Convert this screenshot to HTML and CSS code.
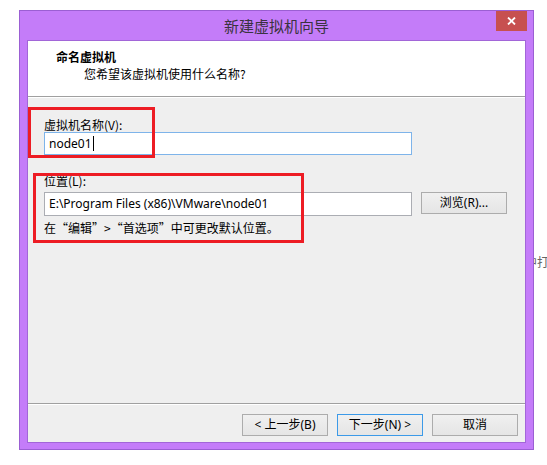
FILE: index.html
```html
<!DOCTYPE html>
<html lang="zh-CN">
<head>
<meta charset="utf-8">
<title>新建虚拟机向导</title>
<link rel="stylesheet" href="styles.css">
</head>
<body>
<div class="stage">
  <span class="behind">中打</span>
  <div class="window">
    <div class="titlebar">
      <span></span>
      <span class="title">新建虚拟机向导</span>
      <button class="close" aria-label="关闭">
        <svg width="9" height="8" viewBox="0 0 9 8"><path d="M1 0.5 L8 7.5 M8 0.5 L1 7.5" stroke="#fff" stroke-width="1.8" fill="none"/></svg>
      </button>
    </div>
    <div class="client">
      <div class="header">
        <div class="h-title">命名虚拟机</div>
        <div class="h-sub">您希望该虚拟机使用什么名称?</div>
      </div>
      <div class="form">
        <label class="lbl">虚拟机名称(V):</label>
        <div class="input focused">node01<span class="caret"></span></div>
        <label class="lbl lbl-loc">位置(L):</label>
        <div class="row">
          <div class="input path">E:\Program Files (x86)\VMware\node01</div>
          <button class="btn browse">浏览(R)...</button>
        </div>
        <div class="hint">在“编辑”&gt;“首选项”中可更改默认位置。</div>
      </div>
      <div class="footer">
        <button class="btn">&lt; 上一步(B)</button>
        <button class="btn default">下一步(N) &gt;</button>
        <button class="btn">取消</button>
      </div>
    </div>
    <div class="mark mark-name"></div>
    <div class="mark mark-loc"></div>
  </div>
</div>
</body>
</html>
```
FILE: styles.css
```css
html, body {
  margin: 0;
  padding: 0;
  background: #ffffff;
}
body {
  font-family: "Noto Sans", "Noto Sans CJK SC", sans-serif;
  font-size: 12px;
  color: #000;
}
.stage {
  position: relative;
  width: 547px;
  height: 465px;
  padding: 10px 0 0 19px;
  box-sizing: border-box;
}
.behind {
  position: absolute;
  left: 525px;
  top: 254px;
  color: #666;
  font-family: "Noto Sans CJK SC", sans-serif;
  font-size: 12px;
  line-height: 16px;
  white-space: nowrap;
  z-index: 0;
}
.window {
  position: relative;
  z-index: 1;
  width: 515px;
  height: 440px;
  box-sizing: border-box;
  background: #c47cf9;
  border: 1px solid #9b5fd3;
  padding: 0 7px 6px 7px;
  display: flex;
  flex-direction: column;
}
.titlebar {
  height: 29px;
  display: grid;
  grid-template-columns: 1fr auto 1fr;
  align-items: center;
}
.title {
  font-family: "Noto Sans CJK SC", sans-serif;
  font-size: 15px;
  color: #3a3340;
  line-height: 20px;
}
.close {
  justify-self: end;
  align-self: start;
  width: 31px;
  height: 20px;
  margin-right: -1px;
  border: 0;
  padding: 0;
  background: #c75050;
  display: flex;
  align-items: center;
  justify-content: center;
}
.client {
  flex: 1;
  background: #efefef;
  border: 1px solid #a266d8;
  display: flex;
  flex-direction: column;
}
.header {
  background: #fff;
  border-bottom: 1px solid #a0a0a0;
  box-shadow: 0 1px 0 #ffffff;
  padding: 8px 0 0 28px;
  box-sizing: content-box;
  height: 47px;
}
.h-title {
  font-family: "Noto Sans CJK SC", sans-serif;
  font-weight: bold;
  line-height: 16px;
}
.h-sub {
  font-family: "Noto Sans CJK SC", sans-serif;
  line-height: 16px;
  margin: 1px 0 0 28px;
}
.form {
  flex: 1;
  display: flex;
  flex-direction: column;
  align-items: flex-start;
  padding: 20px 0 0 16px;
}
.lbl {
  line-height: 15px;
  font-family: "Noto Sans CJK SC", sans-serif;
}
.lbl-loc {
  margin-top: 18px;
}
.input {
  width: 368px;
  height: 23px;
  box-sizing: border-box;
  background: #fff;
  border: 1px solid #abadb3;
  padding: 0 0 0 4px;
  line-height: 21px;
  display: flex;
  align-items: center;
}
.input.focused {
  border-color: #7eb4ea;
}
.caret {
  display: inline-block;
  width: 1px;
  height: 15px;
  background: #000;
  margin-left: 1px;
}
.row {
  display: flex;
  align-items: flex-start;
  gap: 9px;
  margin-top: 4px;
}
.input.path {
  height: 24px;
  line-height: 22px;
}
.hint {
  margin-top: 4px;
  line-height: 15px;
  font-family: "Noto Sans CJK SC", sans-serif;
}
.btn {
  width: 86px;
  height: 22px;
  box-sizing: border-box;
  border: 1px solid #acacac;
  background: linear-gradient(#f0f0f0, #e5e5e5);
  font-family: "Noto Sans", "Noto Sans CJK SC", sans-serif;
  font-size: 12px;
  color: #000;
  padding: 0;
  line-height: 20px;
}
.btn.default {
  border-color: #3c9ae8;
}
.footer {
  height: 39px;
  box-sizing: border-box;
  border-top: 1px solid #a0a0a0;
  box-shadow: inset 0 1px 0 #ffffff;
  display: flex;
  justify-content: flex-end;
  gap: 9px;
  padding: 10px 7px 0 0;
}
.mark {
  position: absolute;
  border: 3px solid #ed1c24;
  box-sizing: border-box;
  z-index: 2;
}
.mark-name {
  left: 8px;
  top: 96px;
  width: 127px;
  height: 51px;
}
.mark-loc {
  left: 13px;
  top: 162px;
  width: 271px;
  height: 70px;
}
```
